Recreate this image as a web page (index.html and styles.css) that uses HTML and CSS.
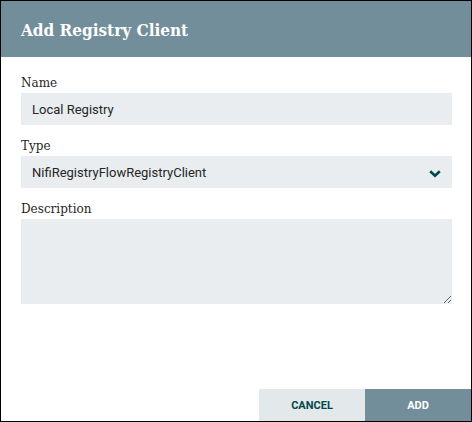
FILE: index.html
```html
<!DOCTYPE html>
<html>
<head>
<meta charset="utf-8">
<link rel="stylesheet" href="styles.css">
</head>
<body>
<div class="dialog">
  <div class="dialog-header">Add Registry Client</div>
  <div class="dialog-body">
    <div class="field">
      <div class="field-label">Name</div>
      <div class="field-input">Local Registry</div>
    </div>
    <div class="field">
      <div class="field-label">Type</div>
      <div class="field-input select">
        <span>NifiRegistryFlowRegistryClient</span>
        <svg class="chevron" width="12" height="8" viewBox="0 0 12 8"><path d="M1.2 1.2 L6 5.8 L10.8 1.2" fill="none" stroke="#004849" stroke-width="2.6" stroke-linecap="butt" stroke-linejoin="miter"/></svg>
      </div>
    </div>
    <div class="field">
      <div class="field-label">Description</div>
      <textarea class="field-textarea"></textarea>
    </div>
  </div>
  <div class="dialog-footer">
    <div class="btn btn-cancel">CANCEL</div>
    <div class="btn btn-add">ADD</div>
  </div>
</div>
</body>
</html>
```
FILE: styles.css
```css
html, body {
  margin: 0;
  padding: 0;
  background: #fff;
}
.dialog {
  width: 472px;
  height: 422px;
  box-sizing: border-box;
  border: 1px solid #000;
  display: flex;
  flex-direction: column;
  background: #fff;
}
.dialog-header {
  height: 56px;
  background: #728e9b;
  color: #fff;
  font-family: "DejaVu Serif", serif;
  font-stretch: condensed;
  font-weight: bold;
  font-size: 17px;
  display: flex;
  align-items: center;
  padding-left: 20px;
  padding-top: 1px;
  box-sizing: border-box;
}
.dialog-body {
  flex: 1;
  padding: 18px 19px 0 20px;
}
.field {
  margin-bottom: 13px;
}
.field-label {
  font-family: "DejaVu Serif", serif;
  font-size: 12px;
  color: #262626;
  line-height: 16px;
  margin-bottom: 2px;
}
.field-input {
  height: 32px;
  background: #e9edf0;
  font-family: Roboto, sans-serif;
  font-size: 13px;
  color: #262626;
  display: flex;
  align-items: center;
  padding-left: 11px;
  padding-right: 11px;
  box-sizing: border-box;
}
.select {
  justify-content: space-between;
}
.chevron {
  margin-top: 4px;
}
.field-textarea {
  display: block;
  width: 100%;
  height: 85px;
  box-sizing: border-box;
  background: #e9edf0;
  border: none;
  outline: none;
  resize: vertical;
  margin: 0;
}
.dialog-footer {
  display: flex;
  justify-content: flex-end;
}
.btn {
  width: 106px;
  height: 32px;
  display: flex;
  align-items: center;
  justify-content: center;
  font-family: Roboto, sans-serif;
  font-weight: bold;
  font-size: 11px;
}
.btn-cancel {
  background: #e3e8eb;
  color: #004849;
}
.btn-add {
  background: #728e9b;
  color: #fff;
}
```
